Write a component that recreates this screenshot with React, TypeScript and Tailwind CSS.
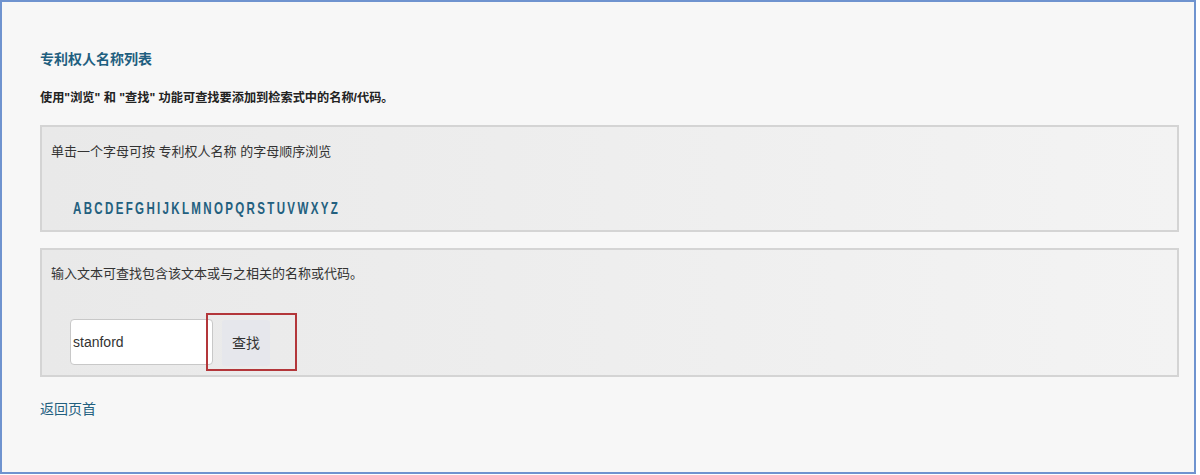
const letters = "ABCDEFGHIJKLMNOPQRSTUVWXYZ".split("");

export default function App() {
  return (
    <div className="w-[1200px] h-[475px] bg-white font-['Liberation_Sans','Noto_Sans_CJK_SC',sans-serif]">
      <div className="w-[1196px] h-[474px] border-2 border-[#6f93cf] bg-[#f7f7f7] px-[38px] pt-[44px]">
        <h2 className="text-[14px] font-bold text-[#1f5f80] leading-[26px]">专利权人名称列表</h2>
        <p className="mt-[16px] text-[12.2px] font-bold text-[#222] leading-[20px]">
          使用"浏览" 和 "查找" 功能可查找要添加到检索式中的名称/代码。
        </p>

        {/* Browse */}
        <div className="mt-[17px] h-[107px] w-[1139px] border-2 border-[#d4d4d4] bg-gradient-to-r from-[#e9e9e9] to-[#f3f3f3] px-[9px] pt-[15px]">
          <p className="text-[13px] text-[#333] leading-[20px]">单击一个字母可按 专利权人名称 的字母顺序浏览</p>
          <div className="mt-[37px] ml-[22px] text-[17px] font-bold text-[#23607f] leading-[20px]">
            <span className="inline-block origin-left scale-x-[0.68] tracking-[3.4px] whitespace-nowrap">
              {letters.map((l) => (
                <a key={l} className="cursor-pointer">{l}</a>
              ))}
            </span>
          </div>
        </div>

        {/* Search */}
        <div className="mt-[16px] h-[129px] w-[1139px] border-2 border-[#d4d4d4] bg-gradient-to-r from-[#e9e9e9] to-[#f3f3f3] px-[9px] pt-[14px]">
          <p className="text-[13px] text-[#333] leading-[20px]">输入文本可查找包含该文本或与之相关的名称或代码。</p>
          <div className="mt-[29px] ml-[19px] flex items-center">
            <input
              defaultValue="stanford"
              className="h-[46px] w-[143px] rounded-[4px] border border-[#c8c8c8] bg-white px-[2px] text-[14px] text-[#333] outline-none"
            />
            <div className="-ml-[7px] border-2 border-[#b3363a] pl-[14px] pr-[25px] pt-[5px] pb-[3px]">
              <button className="h-[46px] w-[48px] rounded-[3px] bg-[#e6e7ec] text-[14px] text-[#333]">查找</button>
            </div>
          </div>
        </div>

        <a className="mt-[21px] block text-[14px] text-[#23607f] leading-[22px] cursor-pointer">返回页首</a>
      </div>
    </div>
  );
}
